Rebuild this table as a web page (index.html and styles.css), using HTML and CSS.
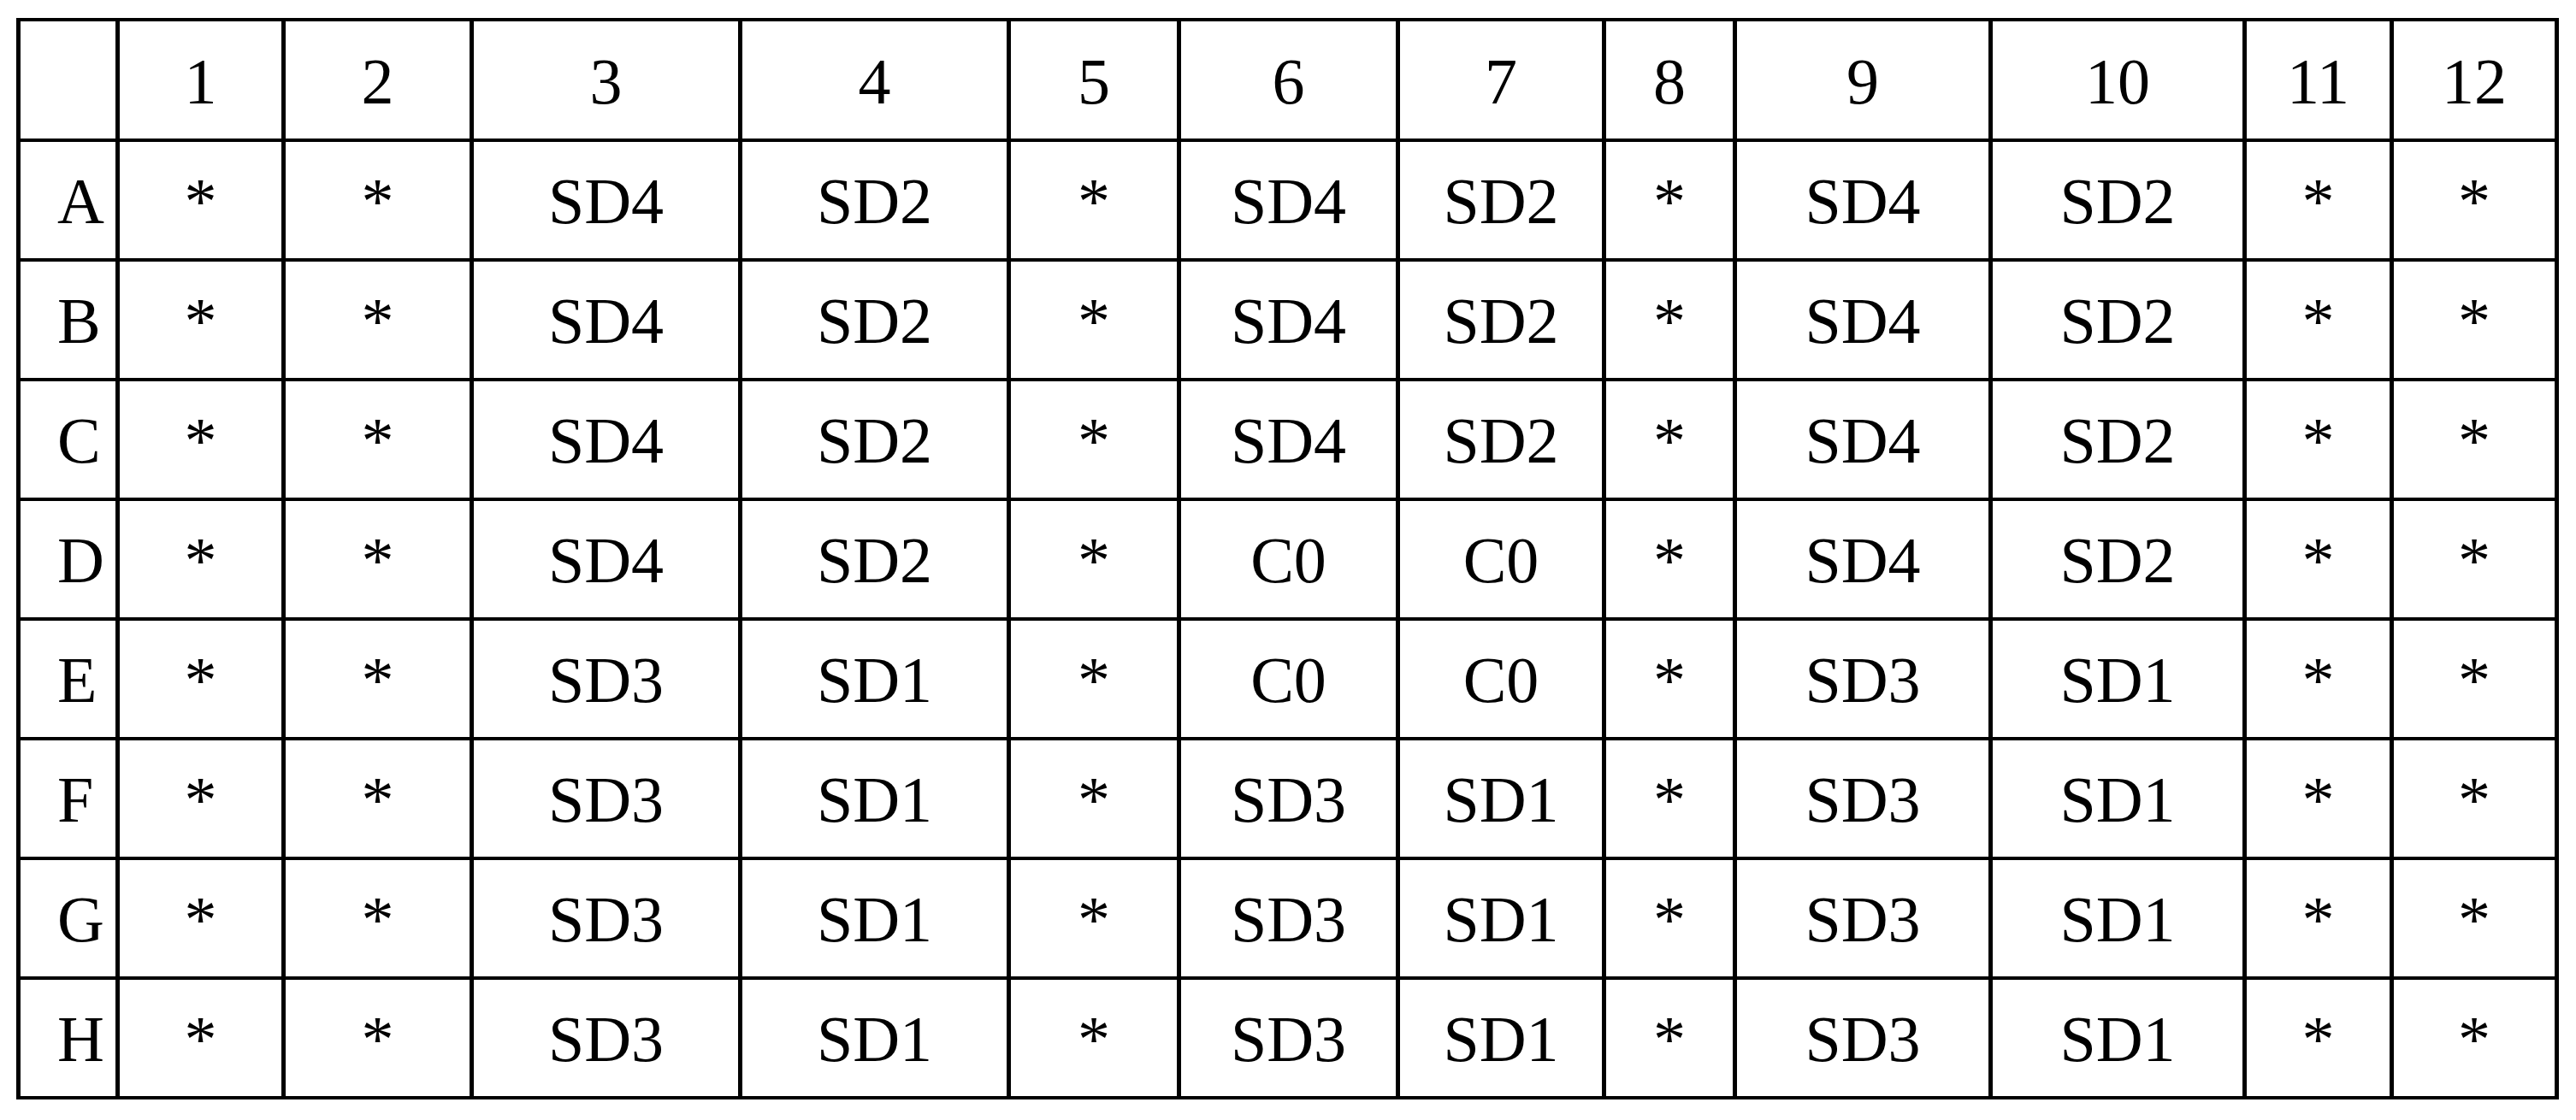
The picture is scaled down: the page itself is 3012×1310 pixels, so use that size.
FILE: index.html
```html
<!DOCTYPE html>
<html>
<head>
<meta charset="utf-8">
<link rel="stylesheet" href="styles.css">
</head>
<body>
<div class="plate">
  <div class="cell head"></div><div class="cell head">1</div><div class="cell head">2</div><div class="cell head">3</div><div class="cell head">4</div><div class="cell head">5</div><div class="cell head">6</div><div class="cell head">7</div><div class="cell head">8</div><div class="cell head">9</div><div class="cell head">10</div><div class="cell head">11</div><div class="cell head">12</div>

  <div class="cell label">A</div><div class="cell">*</div><div class="cell">*</div><div class="cell">SD4</div><div class="cell">SD2</div><div class="cell">*</div><div class="cell">SD4</div><div class="cell">SD2</div><div class="cell">*</div><div class="cell">SD4</div><div class="cell">SD2</div><div class="cell">*</div><div class="cell">*</div>

  <div class="cell label">B</div><div class="cell">*</div><div class="cell">*</div><div class="cell">SD4</div><div class="cell">SD2</div><div class="cell">*</div><div class="cell">SD4</div><div class="cell">SD2</div><div class="cell">*</div><div class="cell">SD4</div><div class="cell">SD2</div><div class="cell">*</div><div class="cell">*</div>

  <div class="cell label">C</div><div class="cell">*</div><div class="cell">*</div><div class="cell">SD4</div><div class="cell">SD2</div><div class="cell">*</div><div class="cell">SD4</div><div class="cell">SD2</div><div class="cell">*</div><div class="cell">SD4</div><div class="cell">SD2</div><div class="cell">*</div><div class="cell">*</div>

  <div class="cell label">D</div><div class="cell">*</div><div class="cell">*</div><div class="cell">SD4</div><div class="cell">SD2</div><div class="cell">*</div><div class="cell">C0</div><div class="cell">C0</div><div class="cell">*</div><div class="cell">SD4</div><div class="cell">SD2</div><div class="cell">*</div><div class="cell">*</div>

  <div class="cell label">E</div><div class="cell">*</div><div class="cell">*</div><div class="cell">SD3</div><div class="cell">SD1</div><div class="cell">*</div><div class="cell">C0</div><div class="cell">C0</div><div class="cell">*</div><div class="cell">SD3</div><div class="cell">SD1</div><div class="cell">*</div><div class="cell">*</div>

  <div class="cell label">F</div><div class="cell">*</div><div class="cell">*</div><div class="cell">SD3</div><div class="cell">SD1</div><div class="cell">*</div><div class="cell">SD3</div><div class="cell">SD1</div><div class="cell">*</div><div class="cell">SD3</div><div class="cell">SD1</div><div class="cell">*</div><div class="cell">*</div>

  <div class="cell label">G</div><div class="cell">*</div><div class="cell">*</div><div class="cell">SD3</div><div class="cell">SD1</div><div class="cell">*</div><div class="cell">SD3</div><div class="cell">SD1</div><div class="cell">*</div><div class="cell">SD3</div><div class="cell">SD1</div><div class="cell">*</div><div class="cell">*</div>

  <div class="cell label">H</div><div class="cell">*</div><div class="cell">*</div><div class="cell">SD3</div><div class="cell">SD1</div><div class="cell">*</div><div class="cell">SD3</div><div class="cell">SD1</div><div class="cell">*</div><div class="cell">SD3</div><div class="cell">SD1</div><div class="cell">*</div><div class="cell">*</div>
</div>
</body>
</html>
```

FILE: styles.css
```css
html, body {
  margin: 0;
  padding: 0;
  background: #ffffff;
}

body {
  padding: 21px 0 0 19px;
  font-family: "Liberation Serif", "Times New Roman", serif;
  color: #000000;
}

.plate {
  display: grid;
  width: max-content;
  grid-template-columns: 111px 189px 215px 309px 309px 194px 251px 236px 148px 294px 292px 167px 188px;
  grid-template-rows: 137px repeat(8, 136px);
  column-gap: 5px;
  row-gap: 4px;
  padding: 4px 5px;
  background: #000000;
}

.cell {
  background: #ffffff;
  font-size: 76px;
  line-height: 133px;
  padding-top: 3px;
  text-align: center;
  white-space: nowrap;
  overflow: hidden;
}

.head {
  line-height: 133px;
  padding-top: 4px;
}

.label {
  text-align: left;
  padding-left: 43px;
}
```
